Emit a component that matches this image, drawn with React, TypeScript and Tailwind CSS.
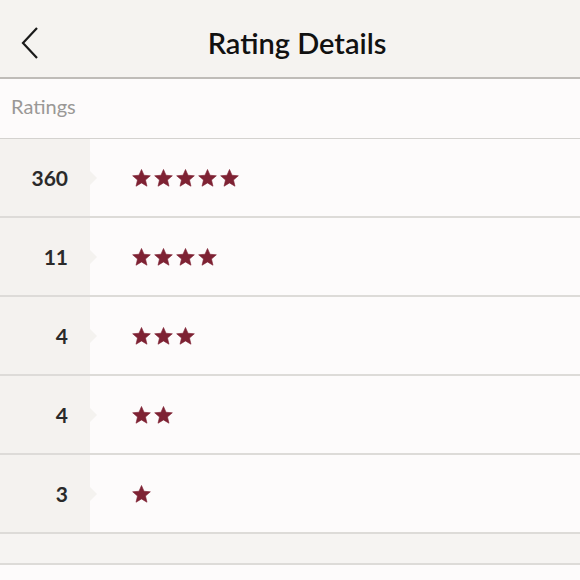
import React from "react";

const ROWS = [
  { count: 360, stars: 5 },
  { count: 11, stars: 4 },
  { count: 4, stars: 3 },
  { count: 4, stars: 2 },
  { count: 3, stars: 1 },
];

function Star() {
  return (
    <svg width="19" height="18" viewBox="0 0 24 23" className="block">
      <path
        d="M12 0.6l3.2 7.4 8.1 .7-6.2 5.3 1.9 8L12 17.8l-7 4.2 1.9-8L.7 8.7l8.1-.7z"
        fill="#7e2233"
        stroke="#7e2233"
        strokeWidth="0.8"
        strokeLinejoin="round"
      />
    </svg>
  );
}

export default function App() {
  return (
    <div
      className="w-[580px] h-[580px] overflow-hidden bg-[#fdfbfb] flex flex-col"
      style={{ fontFamily: "Lato, 'Noto Sans', sans-serif" }}
    >
      {/* header */}
      <div className="h-[79px] bg-[#f5f3f0] border-b-2 border-[#bfbcb8] relative flex items-center justify-center shrink-0">
        <svg width="20" height="34" viewBox="0 0 20 34" className="absolute left-[20px] top-[26px]">
          <path d="M17 2L3 17l14 15" fill="none" stroke="#1a1a1a" strokeWidth="2.2" />
        </svg>
        <span className="text-[29px] font-semibold text-[#111] ml-[14px] mt-[8px]">
          Rating Details
        </span>
      </div>

      {/* section label */}
      <div className="h-[60px] border-b border-[#d4d2cf] flex items-center pl-[11px] shrink-0">
        <span className="text-[20px] text-[#9a9896] mb-[6px]">Ratings</span>
      </div>

      {/* rows */}
      {ROWS.map((r, i) => (
        <div key={i} className="h-[79px] flex border-b-2 border-[#dddbd8] shrink-0">
          <div className="w-[90px] bg-[#f4f2ef] relative flex items-center justify-end pr-[22px]">
            <span className="text-[21px] font-bold text-[#2a2a2a] mt-[1px]">{r.count}</span>
            <div className="absolute right-[-7px] top-1/2 -translate-y-1/2 w-0 h-0 border-y-[7px] border-y-transparent border-l-[7px] border-l-[#f4f2ef]" />
          </div>
          <div className="flex-1 flex items-center gap-[3px] pl-[42px]">
            {Array.from({ length: r.stars }).map((_, j) => (
              <Star key={j} />
            ))}
          </div>
        </div>
      ))}

      {/* footer band */}
      <div className="h-[31px] bg-[#f6f4f2] border-b-2 border-[#dddbd8] shrink-0" />
      <div className="flex-1 bg-[#fdfbfb]" />
    </div>
  );
}
